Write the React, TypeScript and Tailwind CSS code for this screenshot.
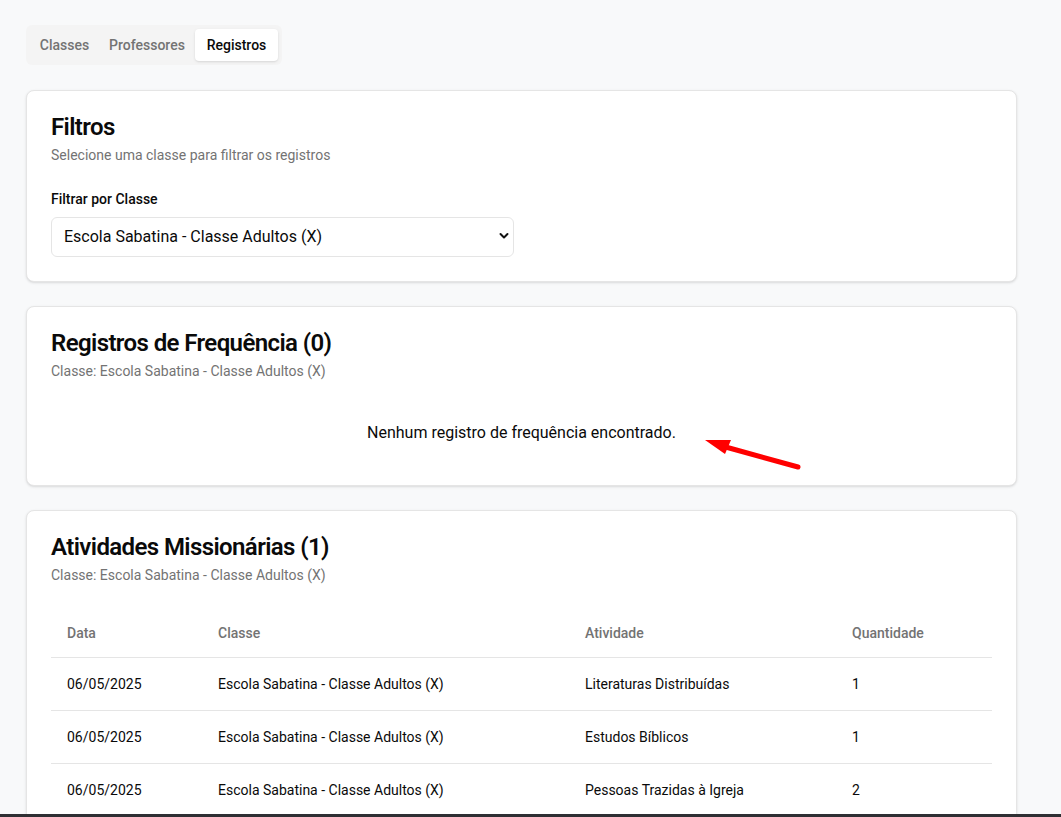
import React from "react";

const rows = [
  { data: "06/05/2025", classe: "Escola Sabatina - Classe Adultos (X)", atividade: "Literaturas Distribuídas", qtd: "1" },
  { data: "06/05/2025", classe: "Escola Sabatina - Classe Adultos (X)", atividade: "Estudos Bíblicos", qtd: "1" },
  { data: "06/05/2025", classe: "Escola Sabatina - Classe Adultos (X)", atividade: "Pessoas Trazidas à Igreja", qtd: "2" },
];

function Card({ title, desc, children }: { title: string; desc: string; children: React.ReactNode }) {
  return (
    <div className="rounded-lg border border-[#e5e5e5] bg-white shadow-sm">
      <div className="flex flex-col gap-[6px] p-6">
        <h3 className="text-2xl font-semibold leading-none tracking-tight text-[#0a0a0a]">{title}</h3>
        <p className="text-sm leading-5 text-[#737373]">{desc}</p>
      </div>
      <div className="px-6 pb-6">{children}</div>
    </div>
  );
}

export default function App() {
  return (
    <div
      className="relative min-h-[817px] bg-[#f8f9fa] pl-[26px] pt-[25px] text-[#0a0a0a]"
      style={{ fontFamily: 'Roboto, "Noto Sans", sans-serif' }}
    >
      <div className="w-[991px]">
        <div className="inline-flex h-10 items-center rounded-md bg-[#f4f4f4] p-1 text-sm font-medium">
          <div className="flex h-8 w-[69px] items-center justify-center rounded-sm text-[#737373]">Classes</div>
          <div className="flex h-8 w-[96px] items-center justify-center rounded-sm text-[#737373]">Professores</div>
          <div className="flex h-8 w-[83px] items-center justify-center rounded-sm bg-white text-[#0a0a0a] shadow-sm">Registros</div>
        </div>

        <div className="mt-[25px] flex flex-col gap-[24px]">
          <Card title="Filtros" desc="Selecione uma classe para filtrar os registros">
            <div className="flex flex-col gap-2">
              <label className="text-sm font-medium leading-5 text-[#0a0a0a]">Filtrar por Classe</label>
              <div className="relative w-[463px]">
                <select
                  className="h-10 w-full appearance-none rounded-md border border-[#e5e5e5] bg-white px-3 text-base text-[#0a0a0a] outline-none"
                  defaultValue="x"
                >
                  <option value="x">Escola Sabatina - Classe Adultos (X)</option>
                </select>
                <svg
                  className="pointer-events-none absolute right-[5px] top-[15px]"
                  width="10"
                  height="8"
                  viewBox="0 0 10 8"
                  fill="none"
                >
                  <path d="M1.5 2l3.5 3.5L8.5 2" stroke="#111" strokeWidth="2" strokeLinecap="round" strokeLinejoin="round" />
                </svg>
              </div>
            </div>
          </Card>

          <Card title="Registros de Frequência (0)" desc="Classe: Escola Sabatina - Classe Adultos (X)">
            <p className="py-4 text-center text-base leading-6 text-[#0a0a0a]">Nenhum registro de frequência encontrado.</p>
          </Card>

          <Card title="Atividades Missionárias (1)" desc="Classe: Escola Sabatina - Classe Adultos (X)">
            <table className="w-full border-collapse text-sm">
              <thead>
                <tr className="border-b border-[#e5e5e5]">
                  <th className="h-12 w-[151px] px-4 text-left align-middle font-medium text-[#737373]">Data</th>
                  <th className="h-12 w-[367px] px-4 text-left align-middle font-medium text-[#737373]">Classe</th>
                  <th className="h-12 w-[267px] px-4 text-left align-middle font-medium text-[#737373]">Atividade</th>
                  <th className="h-12 px-4 text-left align-middle font-medium text-[#737373]">Quantidade</th>
                </tr>
              </thead>
              <tbody>
                {rows.map((r, i) => (
                  <tr key={i} className="border-b border-[#e5e5e5]">
                    <td className="p-4 align-middle leading-5">{r.data}</td>
                    <td className="p-4 align-middle leading-5">{r.classe}</td>
                    <td className="p-4 align-middle leading-5">{r.atividade}</td>
                    <td className="p-4 align-middle leading-5">{r.qtd}</td>
                  </tr>
                ))}
              </tbody>
            </table>
          </Card>
        </div>
      </div>

      <svg className="pointer-events-none absolute left-0 top-0" width="1061" height="817">
        <line x1="798" y1="467" x2="722" y2="446" stroke="#ff0000" strokeWidth="5" strokeLinecap="round" />
        <polygon points="705,440 731,440 725,454" fill="#ff0000" />
      </svg>

      <div className="fixed bottom-0 left-0 h-[3px] w-full bg-[#2f2f33]" />
    </div>
  );
}
